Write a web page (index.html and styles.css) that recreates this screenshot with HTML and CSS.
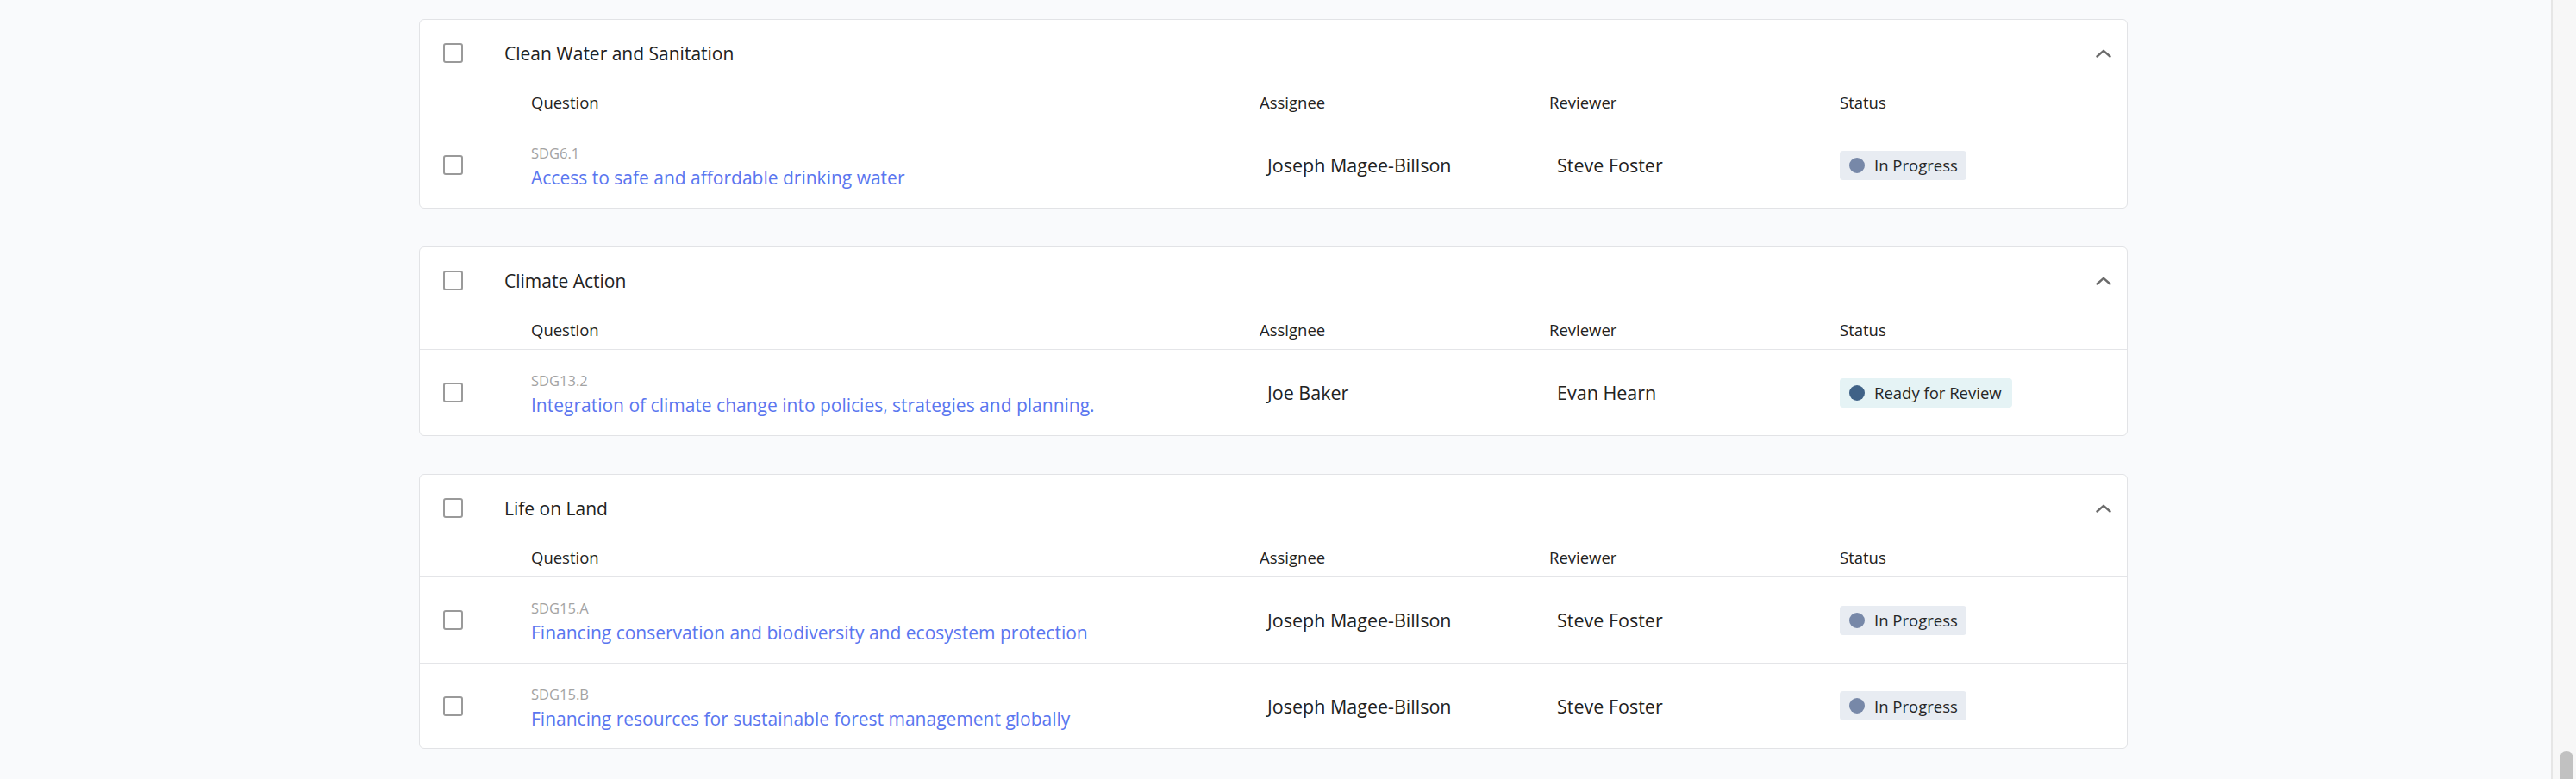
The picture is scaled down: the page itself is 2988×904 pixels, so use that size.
FILE: index.html
```html
<!DOCTYPE html>
<html lang="en">
<head>
<meta charset="utf-8">
<title>Goals</title>
<link rel="stylesheet" href="styles.css">
</head>
<body>
<div class="page">
  <main class="main">
    <div class="list">
      <section class="card">
        <div class="card-head">
          <span class="checkbox"></span>
          <span class="card-title">Clean Water and Sanitation</span>
          <svg class="chevron" viewBox="0 0 18 10" width="18" height="10"><path d="M1.5 8.5 L9 1.8 L16.5 8.5" fill="none" stroke="#6b6b6b" stroke-width="2.4" stroke-linecap="round" stroke-linejoin="round"/></svg>
        </div>
        <div class="grid cols">
          <span></span><span>Question</span><span>Assignee</span><span>Reviewer</span><span>Status</span>
        </div>
        <div class="grid row">
          <div class="cell-check"><span class="checkbox"></span></div>
          <div class="question"><span class="code">SDG6.1</span><a class="link">Access to safe and affordable drinking water</a></div>
          <div class="person">Joseph Magee-Billson</div>
          <div class="person">Steve Foster</div>
          <div><span class="badge progress"><span class="dot"></span>In Progress</span></div>
        </div>
      </section>

      <section class="card">
        <div class="card-head">
          <span class="checkbox"></span>
          <span class="card-title">Climate Action</span>
          <svg class="chevron" viewBox="0 0 18 10" width="18" height="10"><path d="M1.5 8.5 L9 1.8 L16.5 8.5" fill="none" stroke="#6b6b6b" stroke-width="2.4" stroke-linecap="round" stroke-linejoin="round"/></svg>
        </div>
        <div class="grid cols">
          <span></span><span>Question</span><span>Assignee</span><span>Reviewer</span><span>Status</span>
        </div>
        <div class="grid row">
          <div class="cell-check"><span class="checkbox"></span></div>
          <div class="question"><span class="code">SDG13.2</span><a class="link">Integration of climate change into policies, strategies and planning.</a></div>
          <div class="person">Joe Baker</div>
          <div class="person">Evan Hearn</div>
          <div><span class="badge review"><span class="dot"></span>Ready for Review</span></div>
        </div>
      </section>

      <section class="card">
        <div class="card-head">
          <span class="checkbox"></span>
          <span class="card-title">Life on Land</span>
          <svg class="chevron" viewBox="0 0 18 10" width="18" height="10"><path d="M1.5 8.5 L9 1.8 L16.5 8.5" fill="none" stroke="#6b6b6b" stroke-width="2.4" stroke-linecap="round" stroke-linejoin="round"/></svg>
        </div>
        <div class="grid cols">
          <span></span><span>Question</span><span>Assignee</span><span>Reviewer</span><span>Status</span>
        </div>
        <div class="grid row">
          <div class="cell-check"><span class="checkbox"></span></div>
          <div class="question"><span class="code">SDG15.A</span><a class="link">Financing conservation and biodiversity and ecosystem protection</a></div>
          <div class="person">Joseph Magee-Billson</div>
          <div class="person">Steve Foster</div>
          <div><span class="badge progress"><span class="dot"></span>In Progress</span></div>
        </div>
        <div class="grid row">
          <div class="cell-check"><span class="checkbox"></span></div>
          <div class="question"><span class="code">SDG15.B</span><a class="link">Financing resources for sustainable forest management globally</a></div>
          <div class="person">Joseph Magee-Billson</div>
          <div class="person">Steve Foster</div>
          <div><span class="badge progress"><span class="dot"></span>In Progress</span></div>
        </div>
      </section>
    </div>
  </main>
  <aside class="scrollbar"><div class="thumb"></div></aside>
</div>
</body>
</html>
```

FILE: styles.css
```css
* { box-sizing: border-box; }
html, body { margin: 0; height: 100%; overflow: hidden; }
body {
  background: #f9fafc;
  font-family: "Open Sans", "Noto Sans", sans-serif;
  color: #222;
}
.page {
  display: flex;
  height: 904px;
}
.main {
  flex: 1;
  padding: 22px 5px 0 0;
  overflow: hidden;
}
.list {
  width: 1982px;
  margin: 0 auto;
  display: flex;
  flex-direction: column;
  gap: 44px;
}
.card {
  background: #fff;
  border: 1px solid #e2e3e6;
  border-radius: 6px;
}
.card-head {
  display: flex;
  align-items: center;
  height: 77px;
  padding-left: 27px;
  padding-right: 18px;
}
.card-title {
  margin-left: 48px;
  font-size: 21px;
  color: #222;
}
.chevron { margin-left: auto; }
.checkbox {
  display: inline-block;
  width: 23px;
  height: 23px;
  border: 2.5px solid #9a9a9a;
  border-radius: 3px;
  flex: none;
}
.grid {
  display: grid;
  grid-template-columns: 129px 845px 336px 337px 1fr;
  align-items: center;
}
.cols {
  height: 42px;
  padding-bottom: 4px;
  font-size: 18.5px;
  color: #222;
  border-bottom: 1px solid #e4e5e8;
}
.row {
  height: 99px;
}
.row + .row { border-top: 1px solid #e4e5e8; }
.cell-check {
  padding-left: 27px;
  display: flex;
  align-items: center;
}
.question {
  display: flex;
  flex-direction: column;
  gap: 4px;
  padding-top: 5px;
}
.code {
  font-size: 16.5px;
  line-height: 20px;
  color: #a3a3a3;
}
.link {
  font-size: 21px;
  line-height: 28px;
  color: #5a76ef;
}
.person {
  padding-left: 9px;
  font-size: 21.5px;
  color: #222;
}
.badge {
  display: inline-flex;
  align-items: center;
  height: 34px;
  padding: 0 10px 0 11px;
  border-radius: 4px;
  font-size: 18.5px;
  color: #262626;
}
.review { padding-right: 12px; }
.dot {
  width: 18px;
  height: 18px;
  border-radius: 50%;
  margin-right: 11px;
}
.progress { background: #e8ecf2; }
.progress .dot { background: #7788a8; }
.review { background: #e5f3f5; }
.review .dot { background: #3f6287; }
.scrollbar {
  width: 29px;
  flex: none;
  background: #f7f7f7;
  border-left: 2px solid #e6e6e6;
  display: flex;
  flex-direction: column;
  justify-content: flex-end;
  align-items: center;
  padding-left: 4px;
}
.thumb {
  width: 16px;
  height: 32px;
  background: #c1c1c1;
  border-radius: 8px 8px 0 0;
}
```
